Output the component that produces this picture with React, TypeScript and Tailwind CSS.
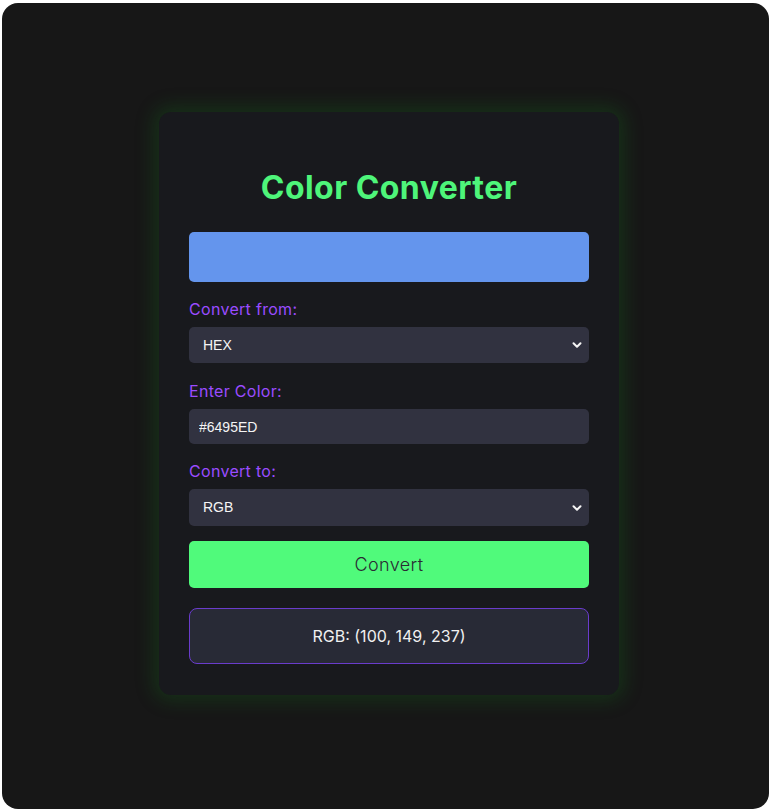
import React, { useState } from 'react';

const Chevron = () => (
  <svg
    className="pointer-events-none absolute right-[7px] top-1/2 -translate-y-1/2"
    width="10"
    height="10"
    viewBox="0 0 10 10"
    fill="none"
  >
    <path d="M1.5 3.2 5 6.7 8.5 3.2" stroke="#f5f5f5" strokeWidth="2" strokeLinecap="round" strokeLinejoin="round" />
  </svg>
);

const App: React.FC = () => {
  const [from, setFrom] = useState('HEX');
  const [to, setTo] = useState('RGB');
  const [value, setValue] = useState('#6495ED');

  return (
    <div className="h-[811px] w-full bg-white pt-[3px] pb-[2px] px-[2px]">
      <div className="flex h-full items-center justify-center rounded-[16px] bg-[#171717] pb-[5px] pl-[7px] font-['Inter',sans-serif]">
        <div className="w-[460px] rounded-[12px] bg-[#18191d] px-[30px] pt-[31px] pb-[31px] shadow-[0_0_18px_6px_rgba(22,110,30,0.28)]">
          <h1 className="mt-[21px] mb-[20px] text-center text-[32px] font-bold leading-[48px] tracking-[0.45px] text-[#4ef57a]">
            Color Converter
          </h1>

          <div className="mb-[15px] h-[50px] rounded-[5px] bg-[#6495ed]" />

          <label className="mb-[6px] block text-[16px] leading-[24px] tracking-[0.3px] text-[#9a4cff]">Convert from:</label>
          <div className="relative mb-[16px]">
            <select
              value={from}
              onChange={(e) => setFrom(e.target.value)}
              className="h-[36px] w-full appearance-none rounded-[5px] bg-[#313240] pl-[14px] font-['Liberation_Sans',Arial,sans-serif] text-[14px] text-[#f5f5f5] outline-none"
            >
              <option>HEX</option>
              <option>RGB</option>
              <option>HSL</option>
            </select>
            <Chevron />
          </div>

          <label className="mb-[6px] block text-[16px] leading-[24px] tracking-[0.3px] text-[#9a4cff]">Enter Color:</label>
          <input
            value={value}
            onChange={(e) => setValue(e.target.value)}
            className="mb-[15px] block h-[35px] w-full rounded-[5px] bg-[#313240] px-[10px] font-['Liberation_Sans',Arial,sans-serif] text-[14px] text-[#f5f5f5] outline-none"
          />

          <label className="mb-[6px] block text-[16px] leading-[24px] tracking-[0.3px] text-[#9a4cff]">Convert to:</label>
          <div className="relative mb-[15px]">
            <select
              value={to}
              onChange={(e) => setTo(e.target.value)}
              className="h-[37px] w-full appearance-none rounded-[5px] bg-[#313240] pl-[14px] font-['Liberation_Sans',Arial,sans-serif] text-[14px] text-[#f5f5f5] outline-none"
            >
              <option>RGB</option>
              <option>HEX</option>
              <option>HSL</option>
            </select>
            <Chevron />
          </div>

          <button className="mb-[20px] block h-[47px] w-full rounded-[5px] bg-[#50fa7b] text-[18px] font-light tracking-[0.4px] text-[#2a2b33]">
            Convert
          </button>

          <div className="flex h-[56px] items-center justify-center rounded-[8px] border border-[#6a3ccc] bg-[#282a36] text-[16px] text-[#f0f0f0]">
            RGB: (100, 149, 237)
          </div>
        </div>
      </div>
    </div>
  );
};

export default App;
